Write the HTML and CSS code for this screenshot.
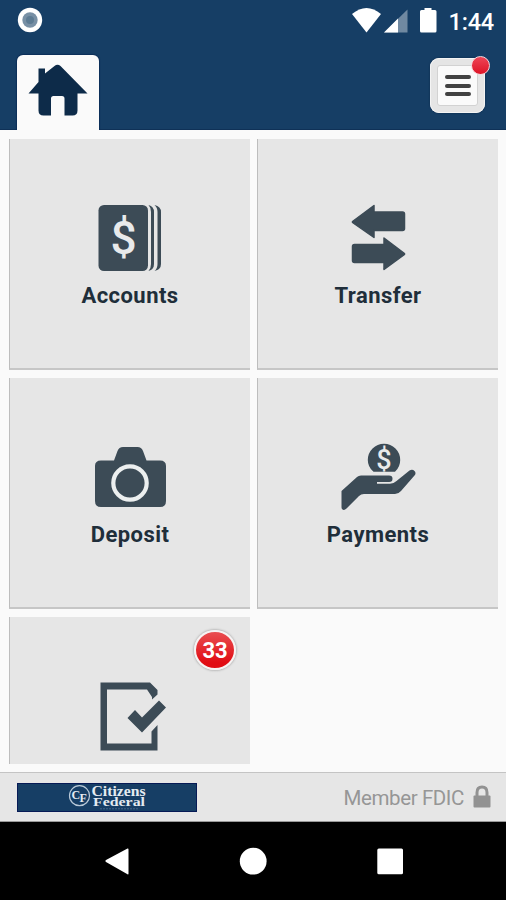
FILE: index.html
```html
<!DOCTYPE html>
<html lang="en">
<head>
    <meta charset="UTF-8">
    <meta name="viewport" content="width=device-width, initial-scale=1.0">
    <title>Citizens Federal</title>
    <link rel="stylesheet" href="styles.css">
</head>
<body>
    <header class="header">
        <div class="status-bar">
            <svg class="status-ring" width="26" height="26" viewBox="0 0 26 26">
                <circle cx="13" cy="13" r="12.2" fill="#fff"/>
                <circle cx="13" cy="13" r="7.7" fill="#7890a5"/>
                <circle cx="13" cy="13" r="4" fill="#5d7b93"/>
            </svg>
            <svg class="status-icons" width="90" height="28" viewBox="0 0 90 28">
                <path d="M1 8Q15.500 -4 30 8L15.500 26.500Z" fill="#fff"/>
                <path d="M56.500 3.500V26.500H33Z" fill="#7089a1"/>
                <path d="M47 12.500V26.500H33Z" fill="#fff"/>
                <path d="M73.500 2h7V4h3.500q1.500 0 1.500 1.500v19.500q0 1.500 -1.500 1.500h-13.500q-1.500 0 -1.500 -1.500v-19.500q0 -1.500 1.500 -1.500h3Z" fill="#fff"/>
            </svg>
            <span class="clock">1:44</span>
        </div>
        <div class="toolbar">
            <a class="home-tab" href="#">
                <svg width="60" height="54" viewBox="0 0 60 54">
                    <path d="M10.500 4.500h6.500v5L26.500 2Q29.500 -0.500 32.500 2L59.500 29.500H49.500V46.500Q49.500 51.500 44.500 51.500H36.500V34.500Q36.500 32 34 32H25.500Q23 32 23 34.500V51.500H15.500Q10.500 51.500 10.500 46.500V29.500H0.500L10.500 18Z" fill="#0d2b49"/>
                </svg>
            </a>
            <button class="menu-btn">
                <span class="menu-lines"><i></i><i></i><i></i></span>
                <span class="menu-dot"></span>
            </button>
        </div>
    </header>

    <main class="tiles">
        <a class="tile" href="#">
            <svg width="80" height="70" viewBox="0 0 80 70">
                <rect x="8.500" y="2" width="49.500" height="66" rx="5.500"/>
                <path d="M58.500 2Q64 3.500 64 9V61Q64 66.500 58.500 68Q61 65.500 61 61V9Q61 4.500 58.500 2Z"/>
                <path d="M64.500 2Q71 3.500 71 9V61Q71 66.500 64.500 68Q67.500 65.500 67.500 61V9Q67.500 4.500 64.500 2Z"/>
                <text class="dollar" x="33.500" y="51" font-size="46">$</text>
            </svg>
            <span class="tile-label">Accounts</span>
        </a>
        <a class="tile" href="#">
            <svg class="arrows" width="80" height="70" viewBox="0 0 80 70">
                <path d="M14.500 18.500L36 2.500V9H64.500Q66.500 9 66.500 11V25.500Q66.500 27.500 64.500 27.500H36V34.500L14.500 19.500Z"/>
                <path d="M66.500 50.500L46 35V41.500H16.500Q14.500 41.500 14.500 43.500V57.500Q14.500 59.500 16.500 59.500H46V66.500L66.500 51.500Z"/>
            </svg>
            <span class="tile-label">Transfer</span>
        </a>
        <a class="tile" href="#">
            <svg width="80" height="70" viewBox="0 0 80 70">
                <path d="M11 18.500H24L27.500 9Q29 5 33 5H47.500Q51.500 5 53 9L56.500 18.500H70Q76 18.500 76 24V59Q76 65 70 65H11Q5 65 5 59V24Q5 18.500 11 18.500Z"/>
                <circle cx="40" cy="41" r="16.700" fill="none" stroke="#ecefef" stroke-width="4.200"/>
            </svg>
            <span class="tile-label">Deposit</span>
        </a>
        <a class="tile" href="#">
            <svg width="80" height="70" viewBox="0 0 80 70">
                <path d="M35.500 29.800Q29.800 25 29.800 18A16.200 16.200 0 0 1 62.200 18Q62.200 25 57 29.800Z"/>
                <text class="dollar" x="46" y="26.500" font-size="27">$</text>
                <path d="M3.500 49L19 35Q20.500 33.500 23 33.500H51Q54.500 33.500 54.500 36.800T51 40H39V41.800H52Q55.500 41.800 58.500 39L71.500 28.500Q74.500 27 76.500 29T76.500 33.500L63 49Q60.500 52 57 52H26Q23 52 21 54L8.500 66.500Q6 69 4 67Q3.500 66.500 3.500 65Z"/>
            </svg>
            <span class="tile-label">Payments</span>
        </a>
        <a class="tile tile-cut" href="#">
            <svg width="80" height="70" viewBox="0 0 80 70">
                <path d="M10.500 1.500H60L67.500 9V13.500L62 18.500V16L57 8.500H17V62.500H61.500V50.500L67.500 44V69.500H10.500Z"/>
                <path d="M37.500 37L45 29L52 36.500L69 19.500L76 26.500L52 51.500Z"/>
            </svg>
            <span class="badge">33</span>
        </a>
    </main>

    <footer class="footer">
        <div class="brand">
            <svg width="180" height="29" viewBox="0 0 180 29">
                <circle cx="62.500" cy="12.700" r="10" fill="none" stroke="#b9c9d8" stroke-width="1.200"/>
                <text x="54.500" y="15.500" font-size="12">C</text>
                <text x="62.500" y="19" font-size="12">F</text>
                <text x="74.500" y="13.300" font-size="14" textLength="54" lengthAdjust="spacingAndGlyphs">Citizens</text>
                <text x="76" y="22.800" font-size="13.500" textLength="52" lengthAdjust="spacingAndGlyphs">Federal</text>
                <path d="M83 25.800H121" stroke="#6f8daa" stroke-width="1" stroke-dasharray="2 1" opacity="0.5"/>
            </svg>
        </div>
        <span class="fdic">Member FDIC</span>
        <svg class="lock" width="18" height="24" viewBox="0 0 18 24">
            <path d="M4 11V7.500Q4 2 9 2T14 7.500V11" fill="none" stroke="#929292" stroke-width="3"/>
            <rect x="0.500" y="10.500" width="17" height="12" rx="1" fill="#929292"/>
        </svg>
    </footer>

    <nav class="android-nav">
        <svg width="506" height="78" viewBox="0 0 506 78" fill="#fff">
            <path d="M106 38L127.500 26.500Q128.500 26 128.500 27.500V51.500Q128.500 53 127.500 52.300L106 40Q104.500 39 106 38Z"/>
            <circle cx="253.200" cy="39.200" r="13.400"/>
            <rect x="377.300" y="26.500" width="25.700" height="25.700" rx="1.500"/>
        </svg>
    </nav>
</body>
</html>
```

FILE: styles.css
```css
* {
    box-sizing: border-box;
}

body {
    margin: 0;
    height: 900px;
    display: flex;
    flex-direction: column;
    overflow: hidden;
    background: #fafafa;
    font-family: Roboto, "Liberation Sans", sans-serif;
}

svg {
    display: block;
}

a {
    text-decoration: none;
}

.header {
    height: 130px;
    background: #163e65;
    border-bottom: 1px solid #0f3157;
}

.status-bar {
    height: 42px;
    display: flex;
    align-items: center;
    padding: 0 12px 2px 17px;
}

.status-icons {
    margin-left: auto;
}

.clock {
    width: 53px;
    padding-top: 3px;
    text-align: right;
    color: #fff;
    font-size: 23.5px;
    font-weight: 500;
    letter-spacing: -0.2px;
    line-height: 28px;
}

.toolbar {
    display: flex;
    justify-content: space-between;
    align-items: flex-start;
    padding: 13px 21px 0 17px;
}

.home-tab {
    width: 82px;
    height: 75px;
    padding: 9px 0 0 11px;
    background: #fafafa;
    border-radius: 6px 6px 0 0;
    box-shadow: 0 0 1px 1px #0c2e58;
    clip-path: inset(-2px -2px 0 -2px);
}

.menu-btn {
    position: relative;
    width: 55px;
    height: 55px;
    margin-top: 3px;
    padding: 7px;
    border: 0;
    border-radius: 9px;
    background: #e5e5e5;
    box-shadow: inset 0 0 0 1px #f4f4f4, 0 0 2px #0b2647;
}

.menu-lines {
    height: 41px;
    display: flex;
    flex-direction: column;
    align-items: center;
    justify-content: center;
    gap: 4.5px;
    background: #fafafa;
    border: 1px solid #d2d2d2;
    border-radius: 3px;
}

.menu-lines i {
    width: 26px;
    height: 4px;
    background: #424242;
    border-radius: 2px;
}

.menu-dot {
    position: absolute;
    top: -2px;
    right: -5px;
    width: 19px;
    height: 19px;
    border: 1.5px solid #f5d5da;
    border-radius: 50%;
    background: linear-gradient(#ee4556, #dd1427);
}

.tiles {
    height: 642px;
    display: grid;
    grid-template-columns: 241px 241px;
    grid-template-rows: 231px 231px 147px;
    gap: 8px 7px;
    padding: 9px 8px 8px 9px;
}

.tile {
    position: relative;
    display: flex;
    flex-direction: column;
    align-items: center;
    padding-top: 64px;
    background: #e6e6e6;
    border-left: 1px solid #bdbdbd;
    border-bottom: 2px solid #c6c6c6;
    fill: #3c4b56;
}

.tile-cut {
    border-bottom: 0;
}

.tile-label {
    margin-top: 9px;
    color: #202e3a;
    font-size: 22px;
    font-weight: 700;
    letter-spacing: 0.45px;
    line-height: 28px;
}

.arrows path {
    stroke: #3c4b56;
    stroke-width: 1.5;
    stroke-linejoin: round;
}

.dollar {
    fill: #e8eaeb;
    font-weight: 500;
    text-anchor: middle;
}

.badge {
    position: absolute;
    top: 13px;
    right: 14px;
    width: 42px;
    height: 40px;
    border: 2px solid #f7f3f3;
    border-radius: 50%;
    background: linear-gradient(#e94e51, #e10c13 85%);
    box-shadow: 0 0 2px 1px #bbb;
    color: #fff;
    font-size: 22px;
    font-weight: 700;
    line-height: 37px;
    text-align: center;
}

.footer {
    height: 50px;
    display: flex;
    align-items: center;
    padding: 0 15px 0 17px;
    background: #e6e6e6;
    border-top: 1px solid #c4c4c4;
    border-bottom: 1px solid #999;
}

.brand {
    background: #163e65;
    box-shadow: inset 0 0 0 1px #061a55;
}

.brand text {
    fill: #e4ebf1;
    font-family: "Liberation Serif", serif;
    font-weight: 700;
}

.fdic {
    margin-left: auto;
    padding-top: 2px;
    color: #969696;
    font-size: 20.5px;
    letter-spacing: -0.4px;
    line-height: 28px;
}

.lock {
    margin-left: 9px;
}

.android-nav {
    height: 78px;
    background: #000;
}
```
